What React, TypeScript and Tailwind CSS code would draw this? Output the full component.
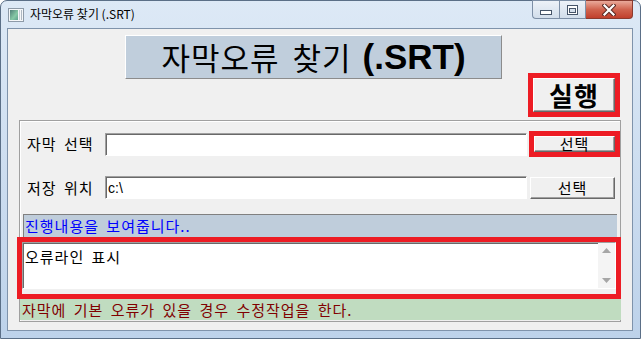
import React from 'react';

const raised =
  'border border-t-white border-l-white border-r-[#696969] border-b-[#696969] shadow-[inset_-1px_-1px_0_#a0a0a0] bg-[#f0f0f0]';
const sunken =
  'border border-t-[#a0a0a0] border-l-[#a0a0a0] border-r-white border-b-white shadow-[inset_1px_1px_0_#696969] bg-white';

function TitleIcon() {
  return (
    <svg width="16" height="16" viewBox="0 0 16 16">
      <defs>
        <linearGradient id="ic" x1="0" y1="0" x2="1" y2="1">
          <stop offset="0" stopColor="#4f7f78" />
          <stop offset="0.6" stopColor="#86c9a6" />
          <stop offset="1" stopColor="#5ea08e" />
        </linearGradient>
      </defs>
      <rect x="0.5" y="1.5" width="15" height="13" fill="#f5f7f9" stroke="#8d9aa8" />
      <rect x="2" y="3" width="8" height="10" fill="url(#ic)" />
      <rect x="11" y="3" width="1" height="10" fill="#c8d0d8" />
      <rect x="13" y="3" width="1" height="10" fill="#aeb8c2" />
    </svg>
  );
}

function WindowControls() {
  return (
    <div className="ml-auto mr-[7px] -mt-[1px] flex h-[19px]">
      <div className="w-[27px] h-full border border-[#7d8fa6] border-r-0 rounded-bl-[4px] bg-gradient-to-b from-[#edf2f8] to-[#d2deeb] flex items-center justify-center">
        <svg width="12" height="5" viewBox="0 0 12 5" className="mt-[5px]">
          <rect x="0.5" y="0.5" width="11" height="4" fill="#fff" stroke="#465569" />
        </svg>
      </div>
      <div className="w-[27px] h-full border border-[#7d8fa6] bg-gradient-to-b from-[#edf2f8] to-[#d2deeb] flex items-center justify-center">
        <svg width="11" height="10" viewBox="0 0 11 10">
          <rect x="0.5" y="0.5" width="10" height="9" fill="#fff" stroke="#465569" />
          <rect x="2.5" y="3.5" width="6" height="4" fill="#d6e0ec" stroke="#465569" />
        </svg>
      </div>
      <div className="w-[47px] h-full border border-[#8b3a2e] border-l-0 rounded-br-[4px] bg-gradient-to-b from-[#e9a99a] via-[#d0634e] to-[#c13f2c] flex items-center justify-center">
        <svg width="14" height="12" viewBox="0 0 14 12">
          <path d="M2.5 1.5 L11.5 10.5 M11.5 1.5 L2.5 10.5" stroke="#5a2a24" strokeWidth="4.2" strokeLinecap="square" />
          <path d="M2.5 1.5 L11.5 10.5 M11.5 1.5 L2.5 10.5" stroke="#fff" strokeWidth="2.2" strokeLinecap="square" />
        </svg>
      </div>
    </div>
  );
}

function Scrollbar() {
  return (
    <div className="w-[17px] h-full bg-[#f4f4f4] flex flex-col items-center justify-between py-[5px]">
      <svg width="9" height="5" viewBox="0 0 9 5">
        <path d="M0 5 L4.5 0 L9 5 Z" fill="#a6a6a6" />
      </svg>
      <svg width="9" height="5" viewBox="0 0 9 5">
        <path d="M0 0 L9 0 L4.5 5 Z" fill="#a6a6a6" />
      </svg>
    </div>
  );
}

export default function App() {
  return (
    <div className="w-[641px] h-[339px] bg-white font-['Noto_Sans_CJK_KR','Noto_Sans',sans-serif] text-black">
      <div className="w-[641px] h-[339px] rounded-t-[7px] border border-[#5b6f87] bg-gradient-to-b from-[#dde9f6] to-[#bdd2ea] flex flex-col">
        {/* title bar */}
        <div className="h-[27px] flex items-start">
          <div className="ml-[7px] mt-[6px]">
            <TitleIcon />
          </div>
          <span className="ml-[6px] mt-[5px] text-[12px] leading-[16px]">자막오류 찾기 (.SRT)</span>
          <WindowControls />
        </div>

        {/* client area */}
        <div className="ml-[6px] mr-[7px] h-[303px] border border-[#7f93ab] bg-[#f0f0f0] flex flex-col">
          <div className="ml-[117px] mt-[6px] w-[377px] h-[44px] bg-[#c0cedc] border border-t-white border-l-white border-r-[#8c8c8c] border-b-[#8c8c8c] flex items-center justify-center">
            <span className="text-[31px] leading-[36px] tracking-[1px]">자막오류</span>
            <span className="ml-[13px] text-[31px] leading-[36px] tracking-[1px]">찾기</span>
            <span className="ml-[11px] text-[35px] leading-[36px] font-bold font-['Liberation_Sans',sans-serif]">(.SRT)</span>
          </div>

          <div className="self-end mr-[12px] -mt-[6px] w-[92px] h-[44px] border-[5px] border-[#ed1c24] flex">
            <div className={`flex-1 ${raised} flex items-center justify-center`}>
              <span className="text-[26px] leading-[30px] font-bold tracking-[1px]">실행</span>
            </div>
          </div>

          {/* group box */}
          <div className="ml-[11px] mr-[11px] mt-[3px] h-[202px] border border-[#a0a0a0] shadow-[inset_1px_1px_0_#fff] flex flex-col">
            <div className="mt-[10px] h-[26px] flex items-center">
              <span className="pl-[7px] w-[85px] text-[15px] leading-[18px] tracking-[1px] [word-spacing:3px]">자막 선택</span>
              <div className={`w-[422px] h-[23px] ${sunken}`} />
              <div className="ml-[2px] w-[91px] h-[26px] border-[5px] border-[#ed1c24] flex">
                <div className={`flex-1 ${raised} flex items-center justify-center`}>
                  <span className="text-[15px] leading-[14px] tracking-[1px]">선택</span>
                </div>
              </div>
            </div>

            <div className="mt-[19px] h-[23px] flex items-center">
              <span className="pl-[7px] w-[85px] text-[15px] leading-[18px] tracking-[1px] [word-spacing:3px]">저장 위치</span>
              <div className={`w-[422px] h-[23px] ${sunken} flex items-center pl-[2px]`}>
                <span className="text-[14px] leading-[16px] font-['Liberation_Sans',sans-serif]">c:\</span>
              </div>
              <div className={`ml-[3px] w-[85px] h-[22px] ${raised} flex items-center justify-center`}>
                <span className="text-[15px] leading-[16px] tracking-[1px]">선택</span>
              </div>
            </div>

            <div className="mt-[15px] mx-[3px] flex flex-col">
              <div className="h-[23px] bg-[#bfcddb] border-t border-l border-[#808080] flex items-center pl-[1px]">
                <span className="text-[15px] leading-[18px] text-[#0000ff] tracking-[1px] [word-spacing:3px]">진행내용을 보여줍니다..</span>
              </div>

              <div className="-ml-[6px] -mr-[4px] h-[62px] border-[5px] border-[#ed1c24] bg-[#f0f0f0]">
                <div className={`h-[47px] flex ${sunken}`}>
                  <div className="flex-1 pl-[2px] pt-[1px]">
                    <span className="text-[15px] leading-[17px] tracking-[1px] [word-spacing:3px]">오류라인 표시</span>
                  </div>
                  <Scrollbar />
                </div>
              </div>

              <div className="-ml-[4px] -mr-[4px] h-[21px] bg-[#c0dcc0] border-l border-[#a0a0a0] flex items-center pl-[2px]">
                <span className="text-[15px] leading-[18px] text-[#800000] tracking-[1px] [word-spacing:3px]">
                  자막에 기본 오류가 있을 경우 수정작업을 한다.
                </span>
              </div>
            </div>
          </div>
        </div>
      </div>
    </div>
  );
}
